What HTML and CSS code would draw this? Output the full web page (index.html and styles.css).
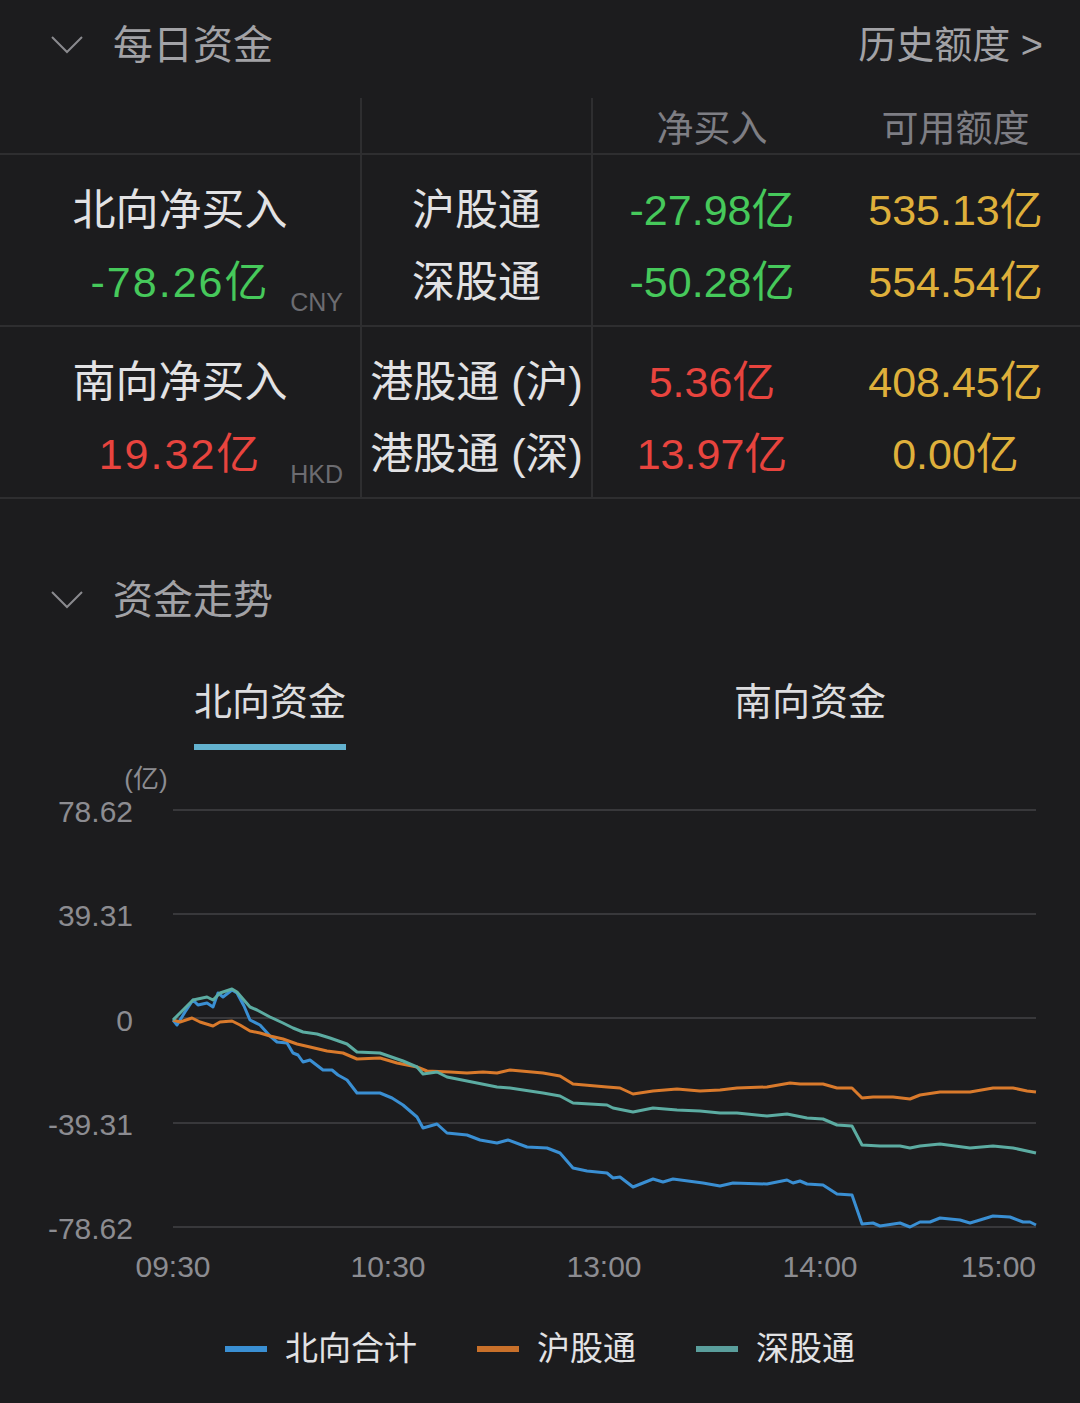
FILE: index.html
```
<!DOCTYPE html>
<html lang="zh-CN">
<head>
    <meta charset="UTF-8">
    <title>每日资金</title>
    <link rel="stylesheet" href="styles.css">
</head>
<body>
    <div class="sec-head">
        <svg class="chev" width="32" height="18" viewBox="0 0 32 18"><polyline points="1,1 16,16 31,1"/></svg>
        <span class="sec-title">每日资金</span>
        <span class="sec-link">历史额度 &gt;</span>
    </div>

    <div class="flow-table">
        <div class="t-row t-head">
            <div class="cell"></div>
            <div class="cell"></div>
            <div class="cell">净买入</div>
            <div class="cell">可用额度</div>
        </div>
        <div class="t-row t-body">
            <div class="cell total">
                <div class="line">北向净买入</div>
                <div class="line sum green">-78.26亿</div>
                <span class="ccy">CNY</span>
            </div>
            <div class="cell">
                <div class="line">沪股通</div>
                <div class="line">深股通</div>
            </div>
            <div class="cell">
                <div class="line green">-27.98亿</div>
                <div class="line green">-50.28亿</div>
            </div>
            <div class="cell">
                <div class="line gold">535.13亿</div>
                <div class="line gold">554.54亿</div>
            </div>
        </div>
        <div class="t-row t-body">
            <div class="cell total">
                <div class="line">南向净买入</div>
                <div class="line sum red">19.32亿</div>
                <span class="ccy">HKD</span>
            </div>
            <div class="cell">
                <div class="line">港股通 (沪)</div>
                <div class="line">港股通 (深)</div>
            </div>
            <div class="cell">
                <div class="line red">5.36亿</div>
                <div class="line red">13.97亿</div>
            </div>
            <div class="cell">
                <div class="line gold">408.45亿</div>
                <div class="line gold">0.00亿</div>
            </div>
        </div>
    </div>

    <div class="sec-head trend-head">
        <svg class="chev" width="32" height="18" viewBox="0 0 32 18"><polyline points="1,1 16,16 31,1"/></svg>
        <span class="sec-title">资金走势</span>
    </div>

    <div class="tabs">
        <div class="tab active"><span>北向资金</span></div>
        <div class="tab"><span>南向资金</span></div>
    </div>

    <svg class="chart" width="1080" height="545" viewBox="0 750 1080 545">
        <text class="unit" x="146" y="788">(亿)</text>

        <g class="grid">
            <line x1="173" y1="810" x2="1036" y2="810"/>
            <line x1="173" y1="914" x2="1036" y2="914"/>
            <line x1="173" y1="1018" x2="1036" y2="1018"/>
            <line x1="173" y1="1123" x2="1036" y2="1123"/>
            <line x1="173" y1="1227" x2="1036" y2="1227"/>
        </g>

        <g class="y-labels">
            <text x="133" y="822">78.62</text>
            <text x="133" y="926">39.31</text>
            <text x="133" y="1031">0</text>
            <text x="133" y="1135">-39.31</text>
            <text x="133" y="1239">-78.62</text>
        </g>

        <g class="x-labels">
            <text x="173" y="1277">09:30</text>
            <text x="388" y="1277">10:30</text>
            <text x="604" y="1277">13:00</text>
            <text x="820" y="1277">14:00</text>
            <text x="1036" y="1277" class="end">15:00</text>
        </g>

        <!-- 北向合计 -->
        <polyline class="ln blue" points="173,1020 177,1025 185,1012 193,1000 198,1005 207,1003 213,1007 218,993 223,997 232,990 237,993 244,1006 250,1020 260,1025 270,1036 277,1042 287,1043 293,1053 298,1055 303,1062 310,1060 323,1070 332,1070 338,1075 347,1080 357,1093 380,1093 392,1098 403,1105 417,1117 423,1128 437,1124 447,1133 467,1135 480,1140 497,1143 508,1140 527,1147 547,1148 560,1153 573,1168 587,1171 607,1173 613,1178 620,1177 633,1187 653,1179 663,1182 673,1179 703,1183 720,1186 733,1183 767,1184 787,1180 793,1183 800,1181 807,1184 823,1185 837,1194 852,1195 862,1224 873,1223 880,1226 900,1223 910,1227 920,1222 930,1222 940,1218 960,1220 970,1223 980,1220 993,1216 1010,1217 1023,1222 1030,1222 1036,1225"/>
        <!-- 沪股通 -->
        <polyline class="ln orange" points="173,1020 180,1022 192,1018 200,1022 213,1026 220,1022 232,1021 240,1025 250,1031 260,1033 270,1036 283,1039 297,1044 310,1047 327,1051 343,1053 357,1059 380,1058 397,1063 417,1067 427,1071 450,1072 467,1073 483,1072 497,1073 510,1070 543,1073 560,1076 573,1084 607,1087 620,1088 633,1094 653,1091 677,1089 700,1091 720,1090 737,1088 767,1087 790,1083 800,1084 823,1084 837,1088 852,1088 862,1098 873,1097 893,1097 910,1099 920,1095 940,1092 970,1092 993,1088 1013,1088 1027,1091 1036,1092"/>
        <!-- 深股通 -->
        <polyline class="ln teal" points="173,1020 180,1013 193,1000 207,997 213,1000 220,993 232,989 237,992 243,999 250,1007 257,1010 270,1017 283,1023 293,1028 303,1032 317,1034 330,1038 347,1044 357,1052 380,1053 403,1061 417,1067 423,1074 437,1072 447,1077 467,1081 497,1087 510,1088 543,1093 560,1096 573,1103 607,1105 613,1108 633,1112 653,1108 677,1110 700,1111 720,1113 737,1113 767,1116 787,1114 807,1118 823,1119 837,1125 852,1126 862,1145 880,1146 900,1146 910,1148 920,1146 940,1144 970,1148 993,1146 1013,1148 1036,1153"/>
    </svg>

    <div class="legend">
        <div class="lg-item"><i class="sw blue-bg"></i>北向合计</div>
        <div class="lg-item"><i class="sw orange-bg"></i>沪股通</div>
        <div class="lg-item"><i class="sw teal-bg"></i>深股通</div>
    </div>
</body>
</html>
```

FILE: styles.css
```
body {
    margin: 0;
    padding: 0;
    background-color: #1c1c1e;
    color: #e2e2e4;
    font-family: "Liberation Sans", "Noto Sans CJK SC", sans-serif;
}

.sec-head {
    display: flex;
    align-items: center;
    height: 90px;
    padding: 0 37px 0 51px;
}
.chev polyline {
    fill: none;
    stroke: #8a8a8e;
    stroke-width: 2;
}
.sec-title {
    margin-left: 30px;
    font-size: 40px;
    line-height: 1;
    color: #a2a2a6;
}
.sec-link {
    margin-left: auto;
    font-size: 38px;
    line-height: 1;
    color: #a2a2a6;
}

.flow-table {
    margin-top: 8px;
}
.t-row {
    display: grid;
    grid-template-columns: 360px 231px 240px 1fr;
    border-bottom: 2px solid #2e2e30;
}
.t-row .cell:nth-child(2),
.t-row .cell:nth-child(3) {
    border-left: 2px solid #2e2e30;
}
.t-head .cell {
    height: 55px;
    display: flex;
    align-items: center;
    justify-content: center;
    font-size: 37px;
    color: #7e7e84;
}
.t-body .cell {
    position: relative;
    display: flex;
    flex-direction: column;
    align-items: center;
    padding: 19px 0 7px;
}
.line {
    height: 72px;
    line-height: 72px;
    font-size: 43px;
    white-space: nowrap;
}
.line.sum {
    letter-spacing: 2px;
}
.ccy {
    position: absolute;
    right: 17px;
    bottom: 10px;
    font-size: 25px;
    line-height: 1;
    color: #6c6c71;
}
.green { color: #46c95b; }
.red { color: #e8443e; }
.gold { color: #dfb03b; }

.trend-head {
    margin-top: 56px;
}

.tabs {
    display: grid;
    grid-template-columns: 1fr 1fr;
}
.tab {
    display: flex;
    justify-content: center;
    padding-top: 32px;
}
.tab span {
    font-size: 38px;
    line-height: 50px;
    padding-bottom: 17px;
    border-bottom: 6px solid transparent;
    color: #dcdcde;
}
.tab.active span {
    border-bottom-color: #63b2cf;
}

.chart {
    display: block;
}
.chart text {
    font-family: "Liberation Sans", "Noto Sans CJK SC", sans-serif;
    font-size: 30px;
    fill: #8c8c91;
}
.chart .unit {
    font-size: 26px;
    text-anchor: middle;
}
.y-labels text {
    text-anchor: end;
}
.x-labels text {
    text-anchor: middle;
}
.x-labels text.end {
    text-anchor: end;
}
.grid line {
    stroke: #38383b;
    stroke-width: 2;
}
.ln {
    fill: none;
    stroke-width: 3;
    stroke-linejoin: round;
}
.blue { stroke: #3a8fd3; }
.orange { stroke: #d97a2c; }
.teal { stroke: #5caca2; }

.legend {
    display: flex;
    justify-content: center;
    gap: 60px;
    padding-top: 30px;
}
.lg-item {
    display: flex;
    align-items: center;
    font-size: 33px;
    line-height: 48px;
    color: #e2e2e4;
}
.sw {
    display: inline-block;
    width: 42px;
    height: 6px;
    margin-right: 18px;
}
.blue-bg { background-color: #3a8fd3; }
.orange-bg { background-color: #c8702a; }
.teal-bg { background-color: #5a9e9c; }
```
